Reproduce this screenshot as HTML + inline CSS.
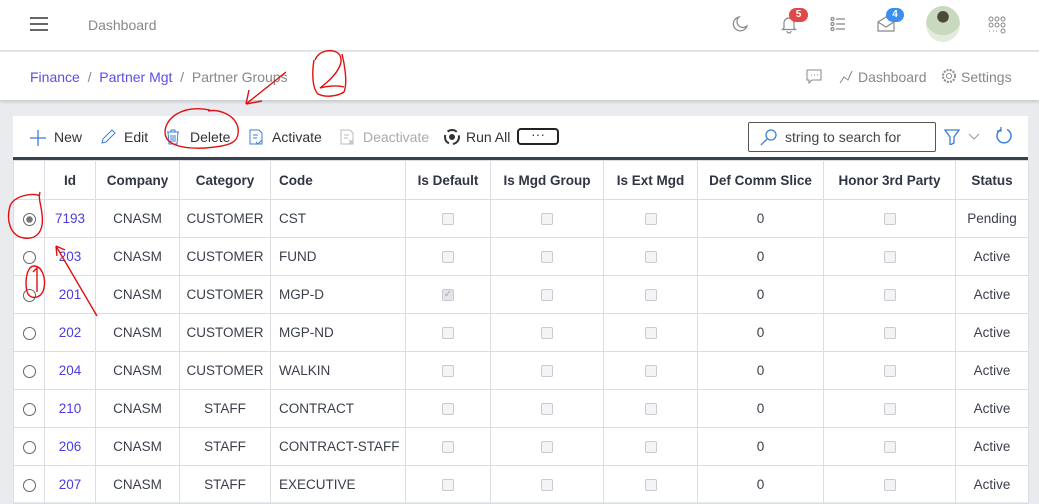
<!DOCTYPE html>
<html><head><meta charset="utf-8"><style>
*{box-sizing:border-box;margin:0;padding:0}
html,body{height:502px}
body{width:1039px;overflow:hidden;background:#eaebef;font-family:"Liberation Sans",sans-serif;font-size:14px;color:#3a3f4a;position:relative}
.a{position:absolute}
.hdr{left:0;top:0;width:1039px;height:51px;background:#fff;border-bottom:1px solid #dcdde1}
.bc{left:0;top:52px;width:1039px;height:48px;background:#fff;box-shadow:0 2px 3px rgba(0,0,0,.15)}
.panel{left:13px;top:116px;width:1015px;height:386px;background:#fff}
table{position:absolute;left:13px;top:160px;border-collapse:collapse;table-layout:fixed;width:1015px}
td,th{border:1px solid #dcdde2;height:38px;text-align:center;font-size:13.5px;white-space:nowrap;overflow:hidden}
th{font-weight:bold;color:#2f3542;height:39px;font-size:13.5px}
td.l,th.l{text-align:left;padding-left:8px}
td.id{color:#4a3de0}
.cb{display:inline-block;width:12px;height:12px;border:1px solid #c9cbd0;border-radius:2px;background:#f4f4f6;vertical-align:middle}
.rd{display:inline-block;width:13px;height:13px;border:1px solid #666;border-radius:50%;vertical-align:middle;background:#fff}
.tb{top:129px;font-size:14px;color:#333}
</style></head><body>
<div class="a hdr"></div>
<div class="a" style="left:30px;top:17px;width:18px;height:2px;background:#666;box-shadow:0 6px 0 #666,0 12px 0 #666"></div>
<div class="a" style="left:88px;top:17px;color:#888">Dashboard</div>
<svg class="a" style="left:730px;top:14px" width="20" height="20" viewBox="0 0 20 20"><path d="M9 3a7 7 0 1 0 8 9a6 6 0 0 1-8-9z" fill="none" stroke="#888" stroke-width="1.2"/></svg>
<svg class="a" style="left:780px;top:14px" width="18" height="20" viewBox="0 0 18 20"><path d="M4 14V9a5 5 0 0 1 10 0v5l1.5 1.5h-13z M7 17a2 2 0 0 0 4 0" fill="none" stroke="#888" stroke-width="1.2"/></svg>
<div class="a" style="left:789px;top:8px;width:19px;height:14px;border-radius:7px;background:#e04848;color:#fff;font-size:10px;font-weight:bold;text-align:center;line-height:14px">5</div>
<svg class="a" style="left:830px;top:16px" width="16" height="16"><g stroke="#888" stroke-width="1.2" fill="none"><circle cx="2.5" cy="3" r="1.5"/><circle cx="2.5" cy="8" r="1.5"/><circle cx="2.5" cy="13" r="1.5"/><path d="M6 3h9M6 8h9M6 13h9"/></g></svg>
<svg class="a" style="left:877px;top:16px" width="18" height="16"><path d="M1 6l8-5 8 5v9H1z M1 6l8 5 8-5" fill="none" stroke="#888" stroke-width="1.2"/></svg>
<div class="a" style="left:886px;top:8px;width:18px;height:14px;border-radius:7px;background:#3b8ff0;color:#fff;font-size:10px;font-weight:bold;text-align:center;line-height:14px">4</div>
<div class="a" style="left:926px;top:6px;width:34px;height:36px;border-radius:50%;background:radial-gradient(circle at 50% 30%,#4a4a3a 0 18%,#c9d9c0 20% 60%,#e3ebdd 61%)"></div>
<svg class="a" style="left:988px;top:16px" width="18" height="20"><g fill="none" stroke="#888" stroke-width="1"><circle cx="3" cy="3" r="2"/><circle cx="9" cy="3" r="2"/><circle cx="15" cy="3" r="2"/><circle cx="3" cy="9" r="2"/><circle cx="9" cy="9" r="2"/><circle cx="15" cy="9" r="2"/><circle cx="15" cy="15" r="2"/></g><path d="M1 15h1M5 15h1M8 15h1" stroke="#888"/></svg>
<div class="a bc"></div>
<div class="a" style="left:30px;top:69px;color:#5b4de6">Finance <span style="color:#888">&nbsp;/&nbsp;</span> Partner Mgt <span style="color:#888">&nbsp;/&nbsp; Partner Groups</span></div>
<svg class="a" style="left:806px;top:69px" width="16" height="15"><path d="M1 1h14v10H6l-3 3v-3H1z" fill="none" stroke="#888"/><path d="M5 6h1M8 6h1M11 6h1" stroke="#888"/></svg>
<svg class="a" style="left:838px;top:69px" width="16" height="16"><path d="M2 14l4-6 4 3 4-9" fill="none" stroke="#888"/></svg>
<div class="a" style="left:858px;top:69px;color:#888">Dashboard</div>
<svg class="a" style="left:941px;top:68px" width="16" height="16"><circle cx="8" cy="8" r="6" fill="none" stroke="#888" stroke-dasharray="2 1.2" stroke-width="2"/><circle cx="8" cy="8" r="2.5" fill="none" stroke="#888"/></svg>
<div class="a" style="left:961px;top:69px;color:#888">Settings</div>
<div class="a panel"></div>
<svg class="a" style="left:30px;top:130px" width="16" height="16"><path d="M8 0v16M0 8h16" stroke="#3b7fd8" stroke-width="1.3"/></svg>
<div class="a tb" style="left:54px">New</div>
<svg class="a" style="left:100px;top:129px" width="16" height="16"><path d="M2 14l1-4 9-9 3 3-9 9z" fill="none" stroke="#3b7fd8"/></svg>
<div class="a tb" style="left:124px">Edit</div>
<svg class="a" style="left:166px;top:129px" width="14" height="16"><path d="M1 3h12M5 3V1h4v2M2 3l1 12h8l1-12M5 6v7M7 6v7M9 6v7" fill="none" stroke="#3b7fd8"/></svg>
<div class="a tb" style="left:190px">Delete</div>
<svg class="a" style="left:248px;top:129px" width="16" height="16"><path d="M2 1h9l3 3v11H2z M5 6h5M5 9h4M8 13l2 2 4-4" fill="none" stroke="#3b7fd8"/></svg>
<div class="a tb" style="left:272px">Activate</div>
<svg class="a" style="left:339px;top:129px" width="16" height="16"><path d="M2 1h9l3 3v11H2z M5 6h5M5 9h4M10 11l4 4M14 11l-4 4" fill="none" stroke="#bbb"/></svg>
<div class="a tb" style="left:363px;color:#aaa">Deactivate</div>
<svg class="a" style="left:443px;top:128px" width="18" height="18"><circle cx="9" cy="9" r="7" fill="none" stroke="#333" stroke-width="2" stroke-dasharray="10 4"/><circle cx="9" cy="9" r="3" fill="#333"/></svg>
<div class="a tb" style="left:466px">Run All</div>
<div class="a" style="left:517px;top:128px;width:42px;height:17px;border:2px solid #222;border-radius:4px;text-align:center;line-height:8px;font-size:14px">···</div>
<div class="a" style="left:748px;top:122px;width:188px;height:30px;border:1px solid #555;border-radius:2px"></div>
<svg class="a" style="left:760px;top:128px" width="18" height="18"><circle cx="11" cy="7" r="5" fill="none" stroke="#3b7fd8" stroke-width="1.3"/><path d="M7 11l-6 6" stroke="#3b7fd8" stroke-width="1.3"/></svg>
<div class="a" style="left:785px;top:129px;color:#444">string to search for</div>
<svg class="a" style="left:944px;top:129px" width="16" height="16"><path d="M1 1h14l-5 7v6l-4 2V8z" fill="none" stroke="#3b7fd8" stroke-width="1.3"/></svg>
<svg class="a" style="left:968px;top:133px" width="12" height="8"><path d="M1 1l5 5 5-5" fill="none" stroke="#999"/></svg>
<svg class="a" style="left:994px;top:126px" width="20" height="20"><path d="M13 3.5A7 7 0 1 1 7 3.5" fill="none" stroke="#3b7fd8" stroke-width="1.5"/><path d="M7 1v4h-4" fill="none" stroke="#3b7fd8" stroke-width="1.3"/></svg>
<div class="a" style="left:13px;top:157px;width:1015px;height:3px;background:#374151"></div>
<table>
<colgroup><col style="width:31px"><col style="width:51px"><col style="width:84px"><col style="width:91px"><col style="width:135px"><col style="width:85px"><col style="width:113px"><col style="width:94px"><col style="width:126px"><col style="width:132px"><col style="width:73px"></colgroup>
<tr><th></th><th>Id</th><th>Company</th><th>Category</th><th class="l">Code</th><th>Is Default</th><th>Is Mgd Group</th><th>Is Ext Mgd</th><th>Def Comm Slice</th><th>Honor 3rd Party</th><th>Status</th></tr>
<tr><td><span class="rd" style="background:radial-gradient(circle,#777 0 3px,#fff 3.5px)"></span></td><td class="id">7193</td><td>CNASM</td><td>CUSTOMER</td><td class="l">CST</td><td><span class="cb"></span></td><td><span class="cb"></span></td><td><span class="cb"></span></td><td>0</td><td><span class="cb"></span></td><td>Pending</td></tr>
<tr><td><span class="rd"></span></td><td class="id">203</td><td>CNASM</td><td>CUSTOMER</td><td class="l">FUND</td><td><span class="cb"></span></td><td><span class="cb"></span></td><td><span class="cb"></span></td><td>0</td><td><span class="cb"></span></td><td>Active</td></tr>
<tr><td><span class="rd"></span></td><td class="id">201</td><td>CNASM</td><td>CUSTOMER</td><td class="l">MGP-D</td><td><span class="cb" style="background:#e4e4e8;text-align:center;font-size:10px;line-height:10px;color:#aaa">✓</span></td><td><span class="cb"></span></td><td><span class="cb"></span></td><td>0</td><td><span class="cb"></span></td><td>Active</td></tr>
<tr><td><span class="rd"></span></td><td class="id">202</td><td>CNASM</td><td>CUSTOMER</td><td class="l">MGP-ND</td><td><span class="cb"></span></td><td><span class="cb"></span></td><td><span class="cb"></span></td><td>0</td><td><span class="cb"></span></td><td>Active</td></tr>
<tr><td><span class="rd"></span></td><td class="id">204</td><td>CNASM</td><td>CUSTOMER</td><td class="l">WALKIN</td><td><span class="cb"></span></td><td><span class="cb"></span></td><td><span class="cb"></span></td><td>0</td><td><span class="cb"></span></td><td>Active</td></tr>
<tr><td><span class="rd"></span></td><td class="id">210</td><td>CNASM</td><td>STAFF</td><td class="l">CONTRACT</td><td><span class="cb"></span></td><td><span class="cb"></span></td><td><span class="cb"></span></td><td>0</td><td><span class="cb"></span></td><td>Active</td></tr>
<tr><td><span class="rd"></span></td><td class="id">206</td><td>CNASM</td><td>STAFF</td><td class="l">CONTRACT-STAFF</td><td><span class="cb"></span></td><td><span class="cb"></span></td><td><span class="cb"></span></td><td>0</td><td><span class="cb"></span></td><td>Active</td></tr>
<tr><td><span class="rd"></span></td><td class="id">207</td><td>CNASM</td><td>STAFF</td><td class="l">EXECUTIVE</td><td><span class="cb"></span></td><td><span class="cb"></span></td><td><span class="cb"></span></td><td>0</td><td><span class="cb"></span></td><td>Active</td></tr>
</table>
<svg class="a" style="left:0;top:0" width="1039" height="502"><g fill="none" stroke="#e01010" stroke-width="1.4">
<path d="M40 196c-8-4-26 0-30 10c-4 14 0 30 14 32c14 2 20-8 18-24c-1-10-4-16-2-22"/>
<path d="M97 316L56 246M56 246l1 10M56 246l9 4"/>
<path d="M34 266c-8 0-10 20-6 28c4 6 14 4 16-6c2-10-2-22-10-22M33 272l4-4v24"/>
<path d="M210 110c-30-6-45 10-45 22c0 14 20 17 40 16c25-2 35-5 33-20c-3-14-20-19-30-17"/>
<path d="M286 72L246 104M246 104l16-3M246 104l3-14"/>
<path d="M315 60c4-10 18-12 24-6c6 8-2 20-14 30l-5 4c8-2 16-3 24-1M314 60c-2 12-2 28 4 34c8 4 20 2 26-2c4-10 0-30-2-38"/>
</g></svg>
</body></html>
